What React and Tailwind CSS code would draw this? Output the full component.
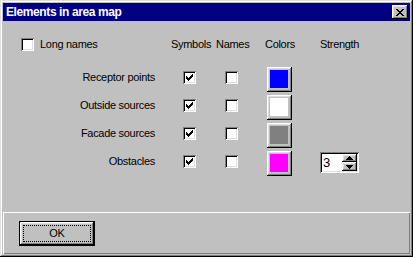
import React from 'react';

const raised = 'shadow-[inset_-1px_-1px_#000,inset_1px_1px_#fff,inset_-2px_-2px_#808080,inset_2px_2px_#dfdfdf]';
const sunken = 'shadow-[inset_1px_1px_#808080,inset_-1px_-1px_#fff,inset_2px_2px_#000,inset_-2px_-2px_#dfdfdf]';

const CheckMark = () => (
  <svg width="7" height="7" viewBox="0 0 7 7" shapeRendering="crispEdges" className="absolute left-[3px] top-[3px]">
    <rect x="6" y="0" width="1" height="1" />
    <rect x="5" y="1" width="2" height="1" />
    <rect x="0" y="2" width="1" height="1" />
    <rect x="4" y="2" width="3" height="1" />
    <rect x="0" y="3" width="2" height="1" />
    <rect x="3" y="3" width="3" height="1" />
    <rect x="0" y="4" width="5" height="1" />
    <rect x="1" y="5" width="3" height="1" />
    <rect x="2" y="6" width="1" height="1" />
  </svg>
);

const Checkbox = ({ checked, className = '' }) => (
  <div className={`relative w-[13px] h-[13px] bg-white shrink-0 ${sunken} ${className}`}>
    {checked && <CheckMark />}
  </div>
);

const ColorButton = ({ color }) => (
  <div className={`w-[25px] h-[25px] bg-[#c0c0c0] pl-[3px] pt-[3px] ${raised}`}>
    <div className={`w-[18px] h-[18px] ${color}`} />
  </div>
);

const Arrow = ({ up }) => (
  <svg width="7" height="4" viewBox="0 0 7 4" shapeRendering="crispEdges">
    {up ? (
      <>
        <rect x="3" y="0" width="1" height="1" />
        <rect x="2" y="1" width="3" height="1" />
        <rect x="1" y="2" width="5" height="1" />
        <rect x="0" y="3" width="7" height="1" />
      </>
    ) : (
      <>
        <rect x="0" y="0" width="7" height="1" />
        <rect x="1" y="1" width="5" height="1" />
        <rect x="2" y="2" width="3" height="1" />
        <rect x="3" y="3" width="1" height="1" />
      </>
    )}
  </svg>
);

const Spinner = () => (
  <div className={`mt-[1px] w-[39px] h-[21px] bg-white p-[2px] flex ${sunken}`}>
    <div className="flex-1 pl-[1px] text-[13px] leading-[17px]">3</div>
    <div className="w-[15px] flex flex-col">
      <div className={`h-[8px] bg-[#c0c0c0] flex items-center justify-center ${raised}`}>
        <Arrow up />
      </div>
      <div className={`h-[9px] bg-[#c0c0c0] flex items-center justify-center ${raised}`}>
        <Arrow />
      </div>
    </div>
  </div>
);

const rows = [
  { name: 'Receptor points', color: 'bg-[#0000ff]' },
  { name: 'Outside sources', color: 'bg-white' },
  { name: 'Facade sources', color: 'bg-[#808080]' },
  { name: 'Obstacles', color: 'bg-[#ff00ff]', strength: true },
];

const cols = 'grid grid-cols-[168px_45px_49px_55px_1fr]';

export default function App() {
  return (
    <div className={`w-[413px] h-[257px] bg-[#c0c0c0] p-[3px] flex flex-col text-black text-[11px] tracking-[-0.3px] font-['Liberation_Sans',sans-serif] shadow-[inset_-1px_-1px_#000,inset_1px_1px_#dfdfdf,inset_-2px_-2px_#808080,inset_2px_2px_#fff]`}>
      {/* title bar */}
      <div className="h-[18px] bg-[#000080] flex items-center justify-between pl-[3px] pr-[2px]">
        <span className="text-white font-bold text-[12px] tracking-[-0.4px] leading-[14px]">Elements in area map</span>
        <div className={`w-[16px] h-[14px] bg-[#c0c0c0] flex items-center justify-center ${raised}`}>
          <svg width="8" height="7" viewBox="0 0 8 7" shapeRendering="crispEdges">
            <rect x="0" y="0" width="2" height="1" />
            <rect x="6" y="0" width="2" height="1" />
            <rect x="1" y="1" width="2" height="1" />
            <rect x="5" y="1" width="2" height="1" />
            <rect x="2" y="2" width="4" height="1" />
            <rect x="3" y="3" width="2" height="1" />
            <rect x="2" y="4" width="4" height="1" />
            <rect x="1" y="5" width="2" height="1" />
            <rect x="5" y="5" width="2" height="1" />
            <rect x="0" y="6" width="2" height="1" />
            <rect x="6" y="6" width="2" height="1" />
          </svg>
        </div>
      </div>

      {/* main */}
      <div className="flex-1 flex flex-col">
        <div className={`${cols} mt-[17px] leading-[13px]`}>
          <div className="flex items-center pl-[18px] gap-[6px]">
            <Checkbox />
            <span>Long names</span>
          </div>
          <span>Symbols</span>
          <span>Names</span>
          <span>Colors</span>
          <span>Strength</span>
        </div>

        <div className="mt-[16px] flex flex-col">
          {rows.map((r) => (
            <div key={r.name} className={`${cols} h-[28px] items-start`}>
              <span className="mt-[4px] leading-[13px] text-right pr-[16px]">{r.name}</span>
              <div className="pl-[12px] mt-[4px]"><Checkbox checked /></div>
              <div className="pl-[9px] mt-[4px]"><Checkbox /></div>
              <div className="pl-[2px]"><ColorButton color={r.color} /></div>
              <div>{r.strength && <Spinner />}</div>
            </div>
          ))}
        </div>
      </div>

      {/* button panel */}
      <div className="h-[42px] shadow-[inset_1px_1px_#fff,inset_-1px_-1px_#808080] pl-[16px] pt-[9px]">
        <div className="w-[76px] h-[25px] border border-black">
          <div className={`w-full h-full p-[3px] ${raised}`}>
            <div className="w-full h-full border border-dotted border-black flex items-center justify-center leading-[13px]">
              OK
            </div>
          </div>
        </div>
      </div>
    </div>
  );
}
